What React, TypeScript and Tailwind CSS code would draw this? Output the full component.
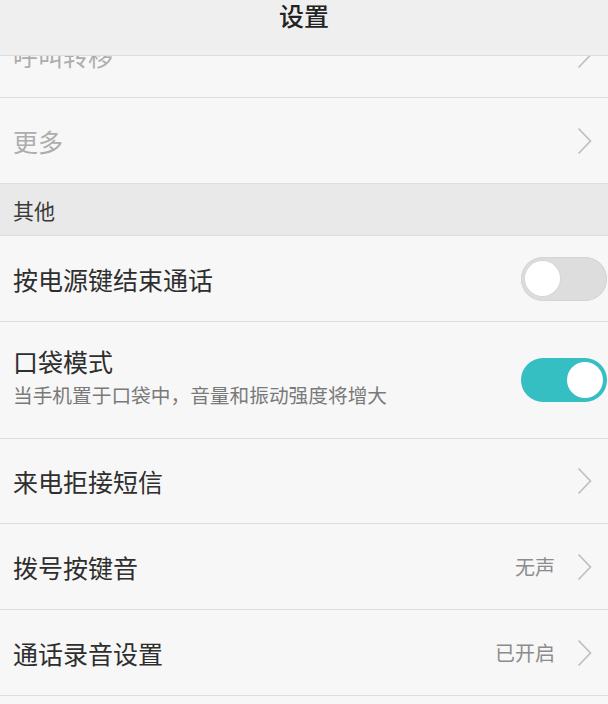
import React from "react";

const font = { fontFamily: '"Noto Sans CJK SC", "Noto Sans", sans-serif' };

function Chevron() {
  return (
    <svg width="15" height="28" viewBox="0 0 15 28" className="shrink-0">
      <polyline points="1.5,1.5 13.5,14 1.5,26.5" fill="none" stroke="#bdbdbd" strokeWidth="1.6" strokeLinejoin="miter" />
    </svg>
  );
}

function Toggle({ on }: { on: boolean }) {
  return on ? (
    <div className="flex h-[44px] w-[86px] items-center justify-end rounded-full bg-[#35bfc2] p-[4px]">
      <div className="h-[36px] w-[36px] rounded-full bg-white" />
    </div>
  ) : (
    <div className="flex h-[44px] w-[86px] items-center justify-start rounded-full bg-[#dddddd] p-[4px] shadow-[inset_0_0_0_1px_#d4d4d4]">
      <div className="h-[35px] w-[35px] rounded-full bg-white shadow-[0_0_0_1px_#d6d6d6]" />
    </div>
  );
}

function NavRow({ title, value, h = "h-[86px]", gray = false }: { title: string; value?: string; h?: string; gray?: boolean }) {
  return (
    <div className={`flex ${h} items-center justify-between border-b border-[#dedede] bg-[#f7f7f7] pl-[13px] pr-[16px]`}>
      <span className={`text-[25px] leading-[30px] ${gray ? "text-[#adadad]" : "text-[#2e2e2e]"}`}>{title}</span>
      <div className="flex items-center gap-[22px]">
        {value && <span className="text-[20px] leading-[24px] text-[#8c8c8c]">{value}</span>}
        <Chevron />
      </div>
    </div>
  );
}

export default function App() {
  return (
    <div className="h-[704px] w-[608px] overflow-hidden bg-[#f7f7f7]" style={font}>
      {/* header */}
      <div className="flex h-[56px] justify-center border-b border-[#dcdcdc] bg-[#efefef] pt-[2px]">
        <span className="text-[25px] font-medium leading-[27px] text-[#222222]">设置</span>
      </div>

      {/* partially scrolled row */}
      <div className="h-[42px] overflow-hidden border-b border-[#dedede] bg-[#f7f7f7]">
        <div className="-mt-[44px] flex h-[85px] items-center justify-between pl-[13px] pr-[16px]">
          <span className="text-[25px] leading-[30px] text-[#adadad]">呼叫转移</span>
          <Chevron />
        </div>
      </div>

      <NavRow title="更多" gray />

      {/* section header */}
      <div className="flex h-[52px] items-center border-b border-[#dcdcdc] bg-[#e9e9e9] pl-[13px]">
        <span className="text-[21px] leading-[26px] text-[#3a3a3a]">其他</span>
      </div>

      <div className="flex h-[86px] items-center justify-between border-b border-[#dedede] bg-[#f7f7f7] pl-[13px] pr-[1px]">
        <span className="text-[25px] leading-[30px] text-[#2e2e2e]">按电源键结束通话</span>
        <Toggle on={false} />
      </div>

      <div className="flex h-[117px] items-center justify-between border-b border-[#dedede] bg-[#f7f7f7] pl-[13px] pr-[1px]">
        <div className="flex flex-col pb-[6px]">
          <span className="text-[25px] leading-[30px] text-[#2e2e2e]">口袋模式</span>
          <span className="mt-[5px] text-[19.7px] leading-[28px] text-[#7a7a7a]">当手机置于口袋中，音量和振动强度将增大</span>
        </div>
        <Toggle on />
      </div>

      <NavRow title="来电拒接短信" h="h-[85px]" />
      <NavRow title="拨号按键音" value="无声" />
      <NavRow title="通话录音设置" value="已开启" />
      <div className="h-[20px] bg-[#f7f7f7]" />
    </div>
  );
}
